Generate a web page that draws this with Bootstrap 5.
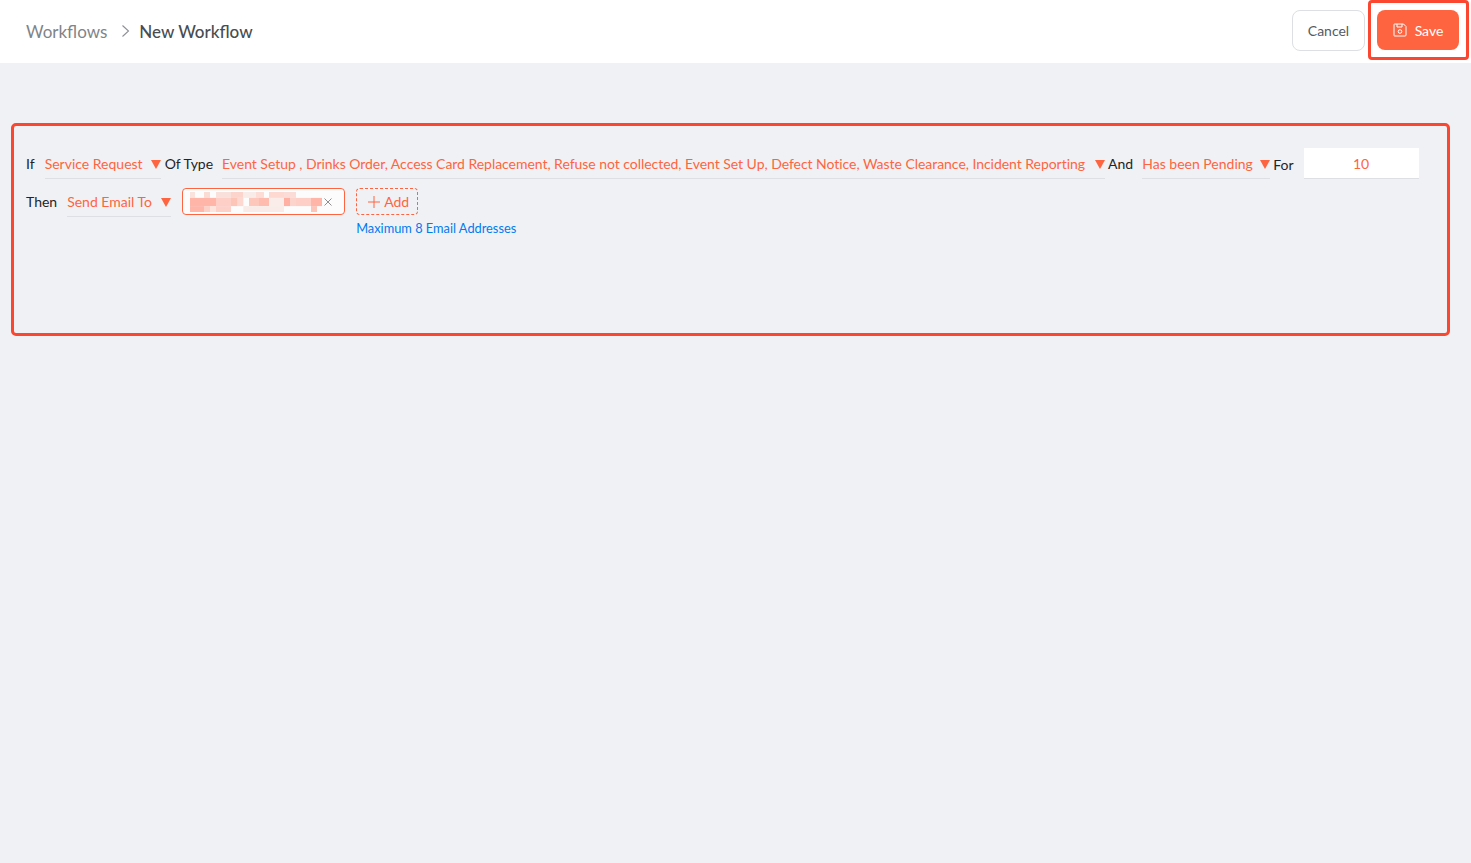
<!DOCTYPE html>
<html lang="en"><head><meta charset="utf-8"><title>New Workflow</title>
<link href="https://cdn.jsdelivr.net/npm/bootstrap@5.3.0/dist/css/bootstrap.min.css" rel="stylesheet">
<style>
html,body{height:100%}
body{background:#f0f1f5;font-family:Lato,"Liberation Sans",sans-serif;font-size:14px;color:#212529}
.topbar{height:63px;padding:0 2px 0 26px}
.crumb{font-size:17px;height:63px}
.crumb-muted{color:#808488}
.crumb-current{color:#474d52;font-weight:500}
.crumb-gap{margin:-2px 9px 0 14px;display:block}
.cancel-btn{width:73px;height:41px;margin-top:10px;border:1px solid #dcdfe3;border-radius:8px;background:#fff;color:#555b61;font-size:14px;padding:0}
.save-btn{width:82px;height:40px;border:0;border-radius:8px;background:#ff6440;color:#fff;font-size:14px;padding:0}
.save-btn:hover{background:#ff6440;color:#fff}
.save-hl{border:3px solid #fb4630;border-radius:4px;padding:7px 6px;margin-left:3px;height:60px;width:101px}
.rule-box{margin:60px 21px 0 11px;height:213px;border:3px solid #fb4630;border-radius:5px;padding:22px 12px 0}
.rule-row{height:31px}
.rule-row2{margin-top:9px}
.pick{color:#ff6440;border-bottom:1px solid #dddfe5;height:31px;line-height:31px}
.pick-wide{width:883px;margin-left:9px}
.pick-wide span{letter-spacing:-.04px}
.pick-type{width:116px;margin-left:10px}
.pick-pending{width:128px;margin-left:9px}
.pick-email{width:104px;height:30px;margin-left:10px;margin-top:-1px}
.caret-down{width:0;height:0;margin-top:2px;border-left:5px solid transparent;border-right:5px solid transparent;border-top:9px solid #ff6440}
.num-in{width:115px;height:31px;margin-left:10px;background:#fff;border:0;border-bottom:1px solid #dddfe5;color:#ff6440;text-align:center;line-height:32px}
.lbl-for{margin-left:3px;padding-top:2px}
.lbl-and{margin-left:3px}
.lbl-then{margin-top:3px}
.email-tag{width:163px;height:27px;margin-left:11px;border:1px solid #ff6440;border-radius:4px;background:#fcfcfc;padding:0 0 0 7px}
.email-x{margin-left:2px}
.add-col{margin-left:11px}
.add-tag{width:62px;height:27px;padding-left:3px;border:1px dashed #ff6440;border-radius:4px;color:#ff6440;background:transparent}
.hint{color:#007bf0;font-size:12.8px;margin-top:5px;line-height:17px}
</style></head>
<body>
<header class="topbar bg-white d-flex align-items-start justify-content-between">
  <nav class="crumb d-flex align-items-center">
    <span class="crumb-muted">Workflows</span>
    <svg class="crumb-gap" width="9" height="14" viewBox="0 0 9 14"><path d="M1.5 1.5 7.500 7l-6 5.500" fill="none" stroke="#8d9094" stroke-width="1.100"/></svg>
    <span class="crumb-current">New Workflow</span>
  </nav>
  <div class="d-flex align-items-start">
    <button class="btn cancel-btn">Cancel</button>
    <div class="save-hl"><button class="btn save-btn d-flex align-items-center justify-content-center gap-2">
      <svg width="14" height="14" viewBox="0 0 14 14" fill="none" stroke="#fff" stroke-width="1"><path d="M1.500 1h9L13 3.500V12a1 1 0 0 1-1 1H1.500a.5.5 0 0 1-.5-.5V1.500a.5.5 0 0 1 .5-.5z"/><path d="M4 1v3h5V1"/><circle cx="7" cy="8.500" r="1.800"/></svg>Save</button></div>
  </div>
</header>
<main class="rule-box">
  <div class="rule-row d-flex align-items-center">
    <span>If</span>
    <div class="pick pick-type d-flex align-items-center justify-content-between"><span>Service Request</span><i class="caret-down"></i></div>
    <span class="ms-1">Of Type</span>
    <div class="pick pick-wide d-flex align-items-center justify-content-between"><span>Event Setup , Drinks Order, Access Card Replacement, Refuse not collected, Event Set Up, Defect Notice, Waste Clearance, Incident Reporting</span><i class="caret-down"></i></div>
    <span class="lbl-and">And</span>
    <div class="pick pick-pending d-flex align-items-center justify-content-between"><span>Has been Pending</span><i class="caret-down"></i></div>
    <span class="lbl-for">For</span>
    <div class="num-in">10</div>
  </div>
  <div class="rule-row2 d-flex align-items-start">
    <span class="lbl-then">Then</span>
    <div class="pick pick-email d-flex align-items-center justify-content-between"><span>Send Email To</span><i class="caret-down"></i></div>
    <div class="email-tag d-flex align-items-center">
      <svg width="132" height="20" viewBox="45 42 396 61" preserveAspectRatio="none">
        <rect x="45" y="42" width="15" height="18" fill="#fbe3dd"/><rect x="87" y="42" width="18" height="18" fill="#fbdcd5"/><rect x="123" y="42" width="45" height="18" fill="#fae0da"/><rect x="168" y="42" width="37" height="18" fill="#fdd4cc"/><rect x="205" y="42" width="38" height="18" fill="#f9ece8"/><rect x="243" y="42" width="24" height="18" fill="#fddcd5"/><rect x="282" y="42" width="45" height="18" fill="#fdd9d2"/><rect x="327" y="42" width="36" height="18" fill="#fcdcd6"/>
        <rect x="45" y="60" width="78" height="25" fill="#ffb5a8"/><rect x="123" y="60" width="45" height="25" fill="#fdcfc6"/><rect x="168" y="60" width="20" height="25" fill="#fdc4b8"/><rect x="188" y="60" width="17" height="25" fill="#fdd8d0"/><rect x="222" y="60" width="30" height="25" fill="#fdc7bb"/><rect x="252" y="60" width="30" height="25" fill="#ffbcae"/><rect x="282" y="60" width="45" height="25" fill="#faece8"/><rect x="327" y="60" width="18" height="25" fill="#ffb0a2"/><rect x="345" y="60" width="18" height="25" fill="#fdd4cc"/><rect x="363" y="60" width="45" height="25" fill="#fdcfc6"/><rect x="408" y="60" width="33" height="25" fill="#ffb5a8"/>
        <rect x="45" y="85" width="42" height="18" fill="#ffb5a8"/><rect x="87" y="85" width="18" height="18" fill="#fcd0c6"/><rect x="105" y="85" width="18" height="18" fill="#fde4dc"/><rect x="123" y="85" width="45" height="18" fill="#fdd0c8"/><rect x="205" y="85" width="122" height="18" fill="#f9ece8"/><rect x="408" y="85" width="18" height="18" fill="#fdc4b8"/>
      </svg>
      <svg class="email-x" width="8" height="8" viewBox="0 0 8 8"><path d="M.5.500l7 7m0-7l-7 7" stroke="#8f8f8f" fill="none"/></svg>
    </div>
    <div class="add-col d-flex flex-column">
      <div class="add-tag d-flex align-items-center justify-content-center gap-1"><svg width="12" height="12" viewBox="0 0 12 12"><path d="M6 0v12M0 6h12" stroke="#ff6440" fill="none"/></svg>Add</div>
      <div class="hint text-nowrap">Maximum 8 Email Addresses</div>
    </div>
  </div>
</main>
</body></html>
